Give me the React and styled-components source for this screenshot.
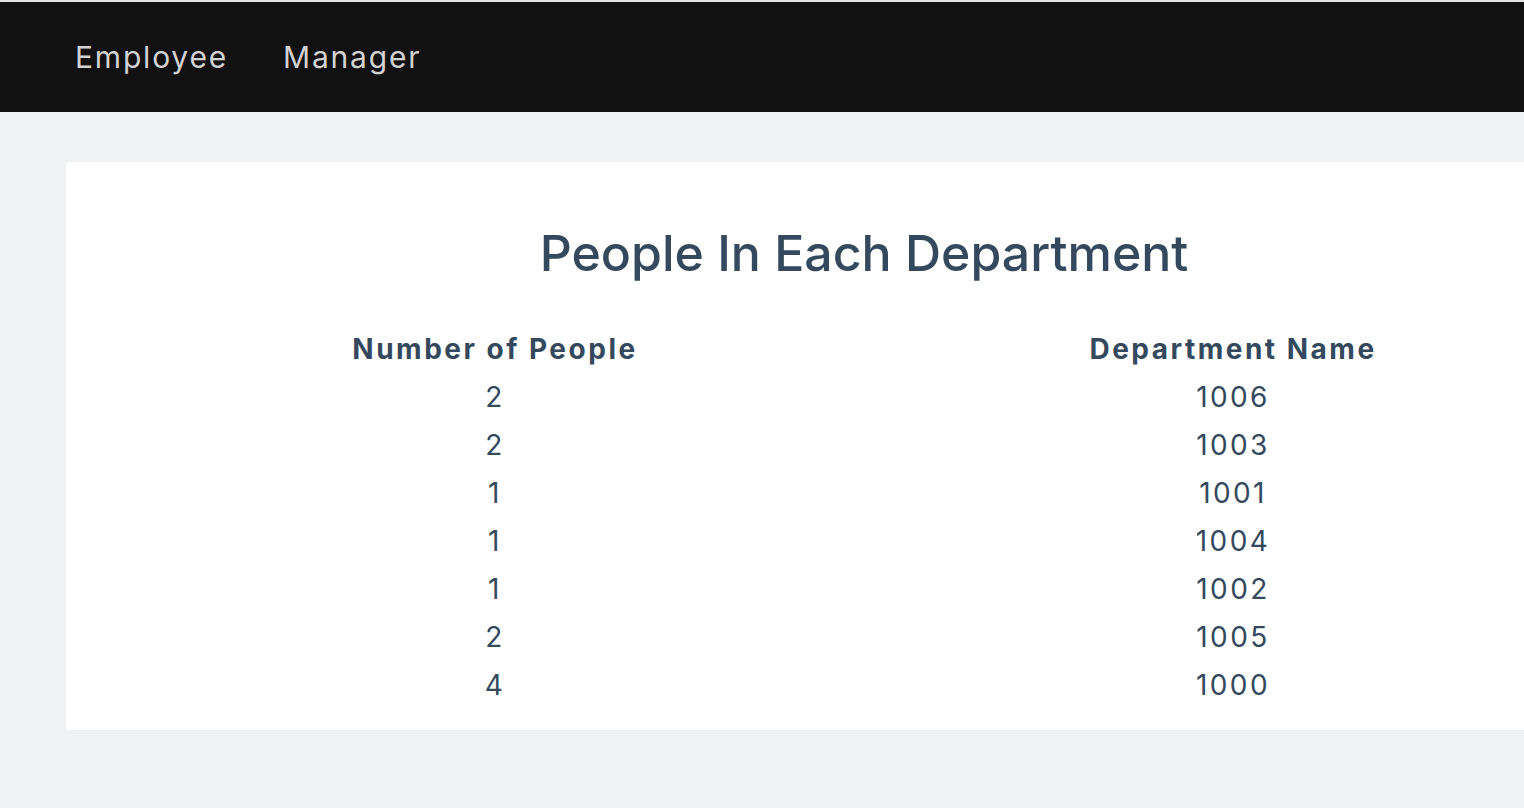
import React from "react"
import styled, { createGlobalStyle } from "styled-components"

const GlobalStyle = createGlobalStyle`
  html, body {
    margin: 0;
    padding: 0;
    background: #f0f1f3;
    overflow-x: hidden;
  }
  body {
    border-top: 2px solid #e4e4e4;
    font-family: Inter, "Noto Sans", "Liberation Sans", sans-serif;
  }
`

const NavBar = styled.nav`
  display: flex;
  align-items: center;
  gap: 55px;
  height: 110px;
  padding: 0 0 0 75px;
  background: #111111;
`

const NavLink = styled.a`
  color: #d2d2d2;
  font-size: 30px;
  letter-spacing: 1.8px;
  text-decoration: none;
  cursor: pointer;
`

const Main = styled.main`
  padding: 50px 0 78px 66px;
`

const Card = styled.section`
  width: 1596px;
  box-sizing: border-box;
  padding: 66px 60px 21px;
  background: #ffffff;
  border-radius: 4px;
`

const Title = styled.h1`
  margin: 0 0 47px;
  text-align: center;
  color: #34495e;
  font-size: 50px;
  font-weight: 500;
  line-height: 1;
  letter-spacing: 0;
`

const Table = styled.table`
  width: 100%;
  border-collapse: collapse;
  color: #34495e;
`

const Cell = styled.td`
  width: 50%;
  padding: 0;
  height: 48px;
  text-align: center;
  font-size: 28px;
  font-weight: 400;
  letter-spacing: 2.4px;
`

const HeadCell = styled(Cell).attrs({ as: "th" })`
  font-weight: 700;
  letter-spacing: 2.5px;
`

const rows = [
  [2, 1006],
  [2, 1003],
  [1, 1001],
  [1, 1004],
  [1, 1002],
  [2, 1005],
  [4, 1000],
]

export default function App() {
  return (
    <>
      <GlobalStyle />
      <NavBar>
        <NavLink>Employee</NavLink>
        <NavLink>Manager</NavLink>
      </NavBar>
      <Main>
        <Card>
          <Title>People In Each Department</Title>
          <Table>
            <thead>
              <tr>
                <HeadCell>Number of People</HeadCell>
                <HeadCell>Department Name</HeadCell>
              </tr>
            </thead>
            <tbody>
              {rows.map(([count, dept]) => (
                <tr key={dept}>
                  <Cell>{count}</Cell>
                  <Cell>{dept}</Cell>
                </tr>
              ))}
            </tbody>
          </Table>
        </Card>
      </Main>
    </>
  )
}
